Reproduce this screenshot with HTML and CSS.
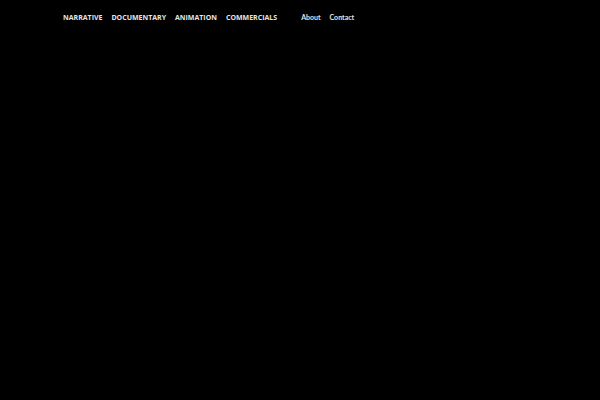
FILE: index.html
```html
<!DOCTYPE html>
<html lang="en">
<head>
    <meta charset="UTF-8">
    <meta name="viewport" content="width=device-width, initial-scale=1.0">
    <title>Portfolio</title>
    <link rel="stylesheet" href="styles.css">
</head>
<body>
    <header class="header">
        <nav class="nav">
            <div class="nav-group categories">
                <a href="#narrative">Narrative</a>
                <a href="#documentary">Documentary</a>
                <a href="#animation">Animation</a>
                <a href="#commercials">Commercials</a>
            </div>
            <div class="nav-group pages">
                <a href="#about">About</a>
                <a href="#contact">Contact</a>
            </div>
        </nav>
    </header>
</body>
</html>
```
FILE: styles.css
```css
* {
    box-sizing: border-box;
    margin: 0;
    padding: 0;
}

body {
    font-family: "Open Sans", "Noto Sans", sans-serif;
    background-color: #000;
    color: #e6e6e6;
    min-height: 100vh;
}

.header {
    padding: 11px 63px;
}

.nav {
    display: flex;
    align-items: baseline;
    gap: 24px;
}

.nav-group {
    display: flex;
    gap: 9px;
}

.nav a {
    color: inherit;
    font-size: 7px;
    font-weight: 700;
    line-height: 12px;
    text-decoration: none;
}

.categories a {
    text-transform: uppercase;
}

.pages {
    font-family: Lato, "Open Sans", sans-serif;
}

.nav a:hover {
    color: #999;
}
```
